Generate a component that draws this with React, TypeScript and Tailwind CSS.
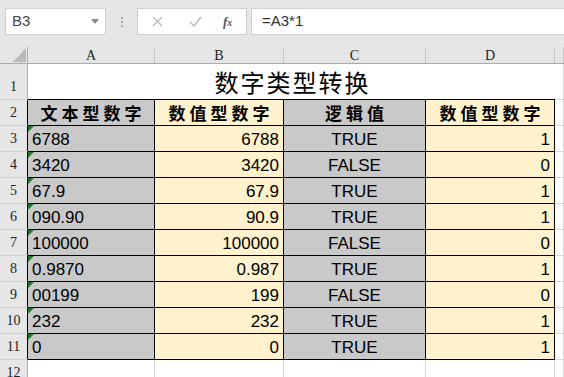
import React from "react"

const rows: [string, string, string, string][] = [
  ["6788", "6788", "TRUE", "1"],
  ["3420", "3420", "FALSE", "0"],
  ["67.9", "67.9", "TRUE", "1"],
  ["090.90", "90.9", "TRUE", "1"],
  ["100000", "100000", "FALSE", "0"],
  ["0.9870", "0.987", "TRUE", "1"],
  ["00199", "199", "FALSE", "0"],
  ["232", "232", "TRUE", "1"],
  ["0", "0", "TRUE", "1"],
]

const serif = { fontFamily: '"Liberation Serif", serif' }

function RowHead({ n, dark }: { n: number; dark?: boolean }) {
  return (
    <div
      className={`w-[28px] shrink-0 bg-[#e6e6e6] border-b border-b-[#d0d0d0] border-r flex items-end justify-center pb-[2px] text-[14px] text-[#222] ${
        dark ? "border-r-black" : "border-r-[#ababab]"
      }`}
      style={serif}
    >
      {n}
    </div>
  )
}

function Edge() {
  return <div className="w-[9px] shrink-0 border-r border-b border-[#d9d9d9]" />
}

export default function App() {
  return (
    <div
      className="w-[564px] h-[377px] overflow-hidden bg-white"
      style={{ fontFamily: '"Liberation Sans", "Noto Sans CJK SC", sans-serif' }}
    >
      {/* formula bar */}
      <div className="h-[47px] bg-[#e6e6e6] flex items-start pt-[8px] pl-[5px]">
        <div className="w-[101px] h-[27px] bg-white border border-[#cfcfcf] flex items-center justify-between pl-[6px] pr-[6px]">
          <span className="text-[15px] text-[#444]">B3</span>
          <svg width="8" height="5" viewBox="0 0 8 5">
            <path d="M0 0 L8 0 L4 5 Z" fill="#8a8a8a" />
          </svg>
        </div>
        <div className="w-[31px] h-[27px] flex flex-col items-center justify-center gap-[2px]">
          <span className="w-[2px] h-[2px] bg-[#a8a8a8]" />
          <span className="w-[2px] h-[2px] bg-[#a8a8a8]" />
          <span className="w-[2px] h-[2px] bg-[#a8a8a8]" />
        </div>
        <div className="w-[110px] h-[27px] bg-white border border-[#cfcfcf] flex items-center pl-[14px]">
          <svg width="11" height="11" viewBox="0 0 11 11">
            <path d="M1 1 L10 10 M10 1 L1 10" stroke="#b8b8b8" strokeWidth="1.3" />
          </svg>
          <svg width="13" height="11" viewBox="0 0 13 11" className="ml-[26px]">
            <path d="M1 6 L5 10 L12 1" stroke="#b8b8b8" strokeWidth="1.4" fill="none" />
          </svg>
          <span className="ml-[21px] text-[13px] italic font-bold text-[#555]" style={serif}>
            f<span className="text-[10px]">x</span>
          </span>
        </div>
        <div className="ml-[4px] flex-1 h-[27px] bg-white border border-r-0 border-[#cfcfcf] flex items-center pl-[10px] text-[15px] text-[#333]">
          =A3*1
        </div>
      </div>

      {/* column headers */}
      <div className="h-[17px] flex bg-[#e6e6e6] border-b border-[#ababab] text-[14px] text-[#222]" style={serif}>
        <div className="w-[28px] shrink-0 border-r border-[#ababab] relative">
          <svg width="13" height="14" viewBox="0 0 13 14" className="absolute right-[1px] bottom-[1px]">
            <path d="M13 0 L13 14 L0 14 Z" fill="#b9b9b9" />
          </svg>
        </div>
        <div className="w-[127px] shrink-0 border-r border-[#c6c6c6] flex items-center justify-center">A</div>
        <div className="w-[129px] shrink-0 border-r border-[#c6c6c6] flex items-center justify-center">B</div>
        <div className="w-[142px] shrink-0 border-r border-[#c6c6c6] flex items-center justify-center">C</div>
        <div className="w-[129px] shrink-0 border-r border-[#c6c6c6] flex items-center justify-center">D</div>
        <div className="w-[9px] shrink-0 border-r border-[#c6c6c6]" />
      </div>

      {/* row 1: title */}
      <div className="h-[36px] flex">
        <RowHead n={1} />
        <div
          className="w-[527px] shrink-0 border-b border-black flex items-center justify-center text-[24px] tracking-[2px] pl-[2px] text-black"
          style={{ fontFamily: '"Noto Sans CJK SC", sans-serif' }}
        >
          数字类型转换
        </div>
        <Edge />
      </div>

      {/* row 2: headings */}
      <div className="h-[26px] flex">
        <RowHead n={2} dark />
        {[
          ["文本型数字", "w-[127px] bg-[#c9c9c9]"],
          ["数值型数字", "w-[129px] bg-[#fff2cc]"],
          ["逻辑值", "w-[142px] bg-[#c9c9c9]"],
          ["数值型数字", "w-[129px] bg-[#fff2cc]"],
        ].map(([label, cls], i) => (
          <div
            key={i}
            className={`${cls} shrink-0 border-r border-b border-black flex items-center justify-center text-[17px] font-bold tracking-[4px] pl-[4px] text-black`}
            style={{ fontFamily: '"Noto Sans CJK SC", sans-serif' }}
          >
            {label}
          </div>
        ))}
        <Edge />
      </div>

      {/* data rows */}
      {rows.map(([a, b, c, d], i) => (
        <div key={i} className="h-[26px] flex text-[17px] text-black">
          <RowHead n={i + 3} dark />
          <div className="w-[127px] shrink-0 bg-[#c9c9c9] border-r border-b border-black relative flex items-center pl-[4px] pt-[2px]">
            <span className="absolute top-0 left-0 w-0 h-0 border-t-[6px] border-r-[6px] border-t-[#1f7a30] border-r-transparent" />
            {a}
          </div>
          <div className="w-[129px] shrink-0 bg-[#fff2cc] border-r border-b border-black flex items-center justify-end pr-[4px] pt-[2px]">
            {b}
          </div>
          <div className="w-[142px] shrink-0 bg-[#c9c9c9] border-r border-b border-black flex items-center justify-center pt-[2px]">
            {c}
          </div>
          <div className="w-[129px] shrink-0 bg-[#fff2cc] border-r border-b border-black flex items-center justify-end pr-[4px] pt-[2px]">
            {d}
          </div>
          <Edge />
        </div>
      ))}

      {/* row 12 */}
      <div className="h-[26px] flex">
        <RowHead n={12} />
        <div className="w-[127px] shrink-0 border-r border-b border-[#d9d9d9]" />
        <div className="w-[129px] shrink-0 border-r border-b border-[#d9d9d9]" />
        <div className="w-[142px] shrink-0 border-r border-b border-[#d9d9d9]" />
        <div className="w-[129px] shrink-0 border-r border-b border-[#d9d9d9]" />
        <Edge />
      </div>
    </div>
  )
}
